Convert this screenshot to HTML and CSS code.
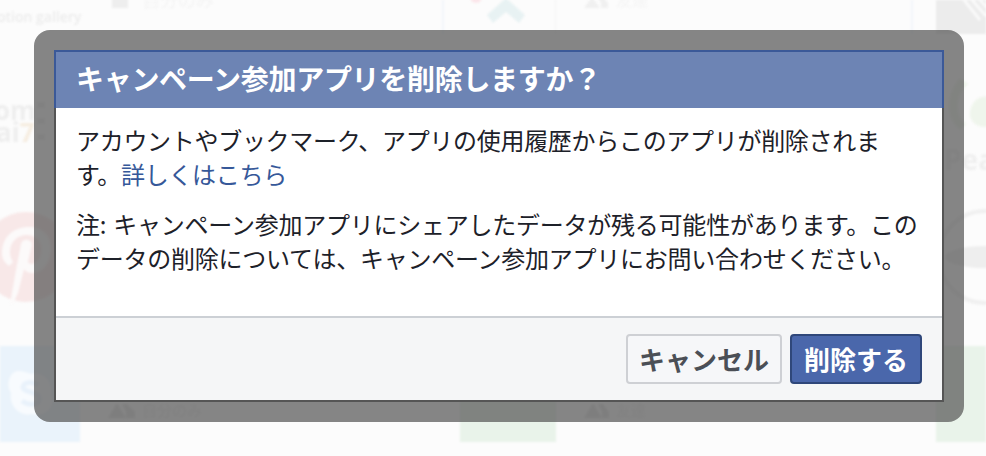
FILE: index.html
```html
<!DOCTYPE html>
<html lang="ja">
<head>
<meta charset="utf-8">
<title>キャンペーン参加アプリを削除しますか？</title>
<link rel="stylesheet" href="styles.css">
</head>
<body>
<svg class="backdrop" viewBox="0 0 986 456" width="986" height="456" aria-hidden="true">
  <g class="soft">
    <rect class="tile-blue" x="0" y="346" width="80" height="96"/>
    <rect class="tile-green" x="460" y="346" width="96" height="96"/>
    <rect class="tile-green" x="936" y="346" width="50" height="96"/>
    <rect class="tile-gray" x="936" y="0" width="50" height="34"/>
    <path class="stripe" d="M980 0l14 16M972 0l14 16M964 0l16 20"/>
    <rect class="edge" x="442" y="0" width="2" height="34"/>
    <rect class="edge" x="911" y="0" width="2" height="34"/>
    <rect class="edge-gray" x="555" y="0" width="1" height="34"/>

    <circle class="pin" cx="26" cy="257" r="45"/>
    <path class="pin-p" d="M2 254c0-18 12-27 27-27 14 0 22 9 22 21 0 15-8 25-19 25-4 0-7-2-8-4l-6 24-5 11-3 0 6-34 5-26c1-5 9-6 11 0l-4 18c3 5 13 1 13-13 0-9-6-14-14-14-11 0-17 8-17 17 0 5 2 8 3 10l-4 4c-4-3-7-7-7-12z"/>

    <path class="skype" d="M18 371c6 0 10 2 13 3 14-3 22 8 20 21 2 4 2 8 0 12-4 7-12 9-18 7-14 3-24-8-22-21-6-10 0-22 7-22z"/>
    <path class="skype-s" d="M38 385c-6-4-14-3-15 2 0 6 16 4 16 12 0 6-10 7-17 2" />

    <path class="chevron" d="M487 15l19-17 19 17-6 8-13-11-13 11z"/>
    <circle class="dot-pink" cx="476" cy="-3" r="6"/>

    <text class="blur-text" x="-3" y="22">otion gallery</text>
    <rect class="square" x="112" y="-4" width="16" height="12"/>
    <text class="faint-text" x="142" y="7">自分のみ</text>

    <path class="people" d="M584 8l8-11 8 11zM601 8v-5l-3-6 5 0 5 6v5z"/>
    <text class="faint-text small" x="616" y="6">友達</text>

    <text class="big-text" x="-6" y="120">om</text>
    <text class="big-text" x="-4" y="142">ai<tspan class="orange">7</tspan></text>
    <rect class="square" x="37" y="102" width="8" height="6"/>
    <rect class="square" x="37" y="118" width="8" height="6"/>
    <rect class="square" x="37" y="134" width="8" height="6"/>

    <path class="leaf" d="M960 78c-14 14-16 40 0 52l6-6c-12-10-10-30 2-40zM976 100c8-6 14-4 14 4v22c-10 4-22-4-20-14 0-4 2-8 6-12z"/>
    <text class="big-text pea" x="944" y="170">Pea</text>
    <circle class="ring" cx="985" cy="257" r="46"/>
    <ellipse class="lens" cx="985" cy="257" rx="40" ry="11"/>

    <path class="people-under" d="M108 418l9-15 9 15zM126 418v-6l-4-8 5 0 8 8v6z"/>
    <text class="under-text" x="142" y="416">自分のみ</text>
    <path class="people-under" d="M584 418l9-15 9 15zM602 418v-6l-4-8 5 0 6 8v6z"/>
    <text class="under-text" x="616" y="416">友達</text>
  </g>
</svg>

<section class="frame" role="dialog" aria-labelledby="dialog-title">
  <div class="dialog">
    <h1 class="dialog-title" id="dialog-title">キャンペーン参加アプリを削除しますか？</h1>
    <div class="dialog-body">
      <p class="copy">アカウントやブックマーク、アプリの使用履歴からこのアプリが削除されます。<a class="more" href="#">詳しくはこちら</a></p>
      <p class="copy note">注: キャンペーン参加アプリにシェアしたデータが残る可能性があります。このデータの削除については、キャンペーン参加アプリにお問い合わせください。</p>
    </div>
    <div class="dialog-footer">
      <button class="btn btn-cancel" type="button">キャンセル</button>
      <button class="btn btn-delete" type="button">削除する</button>
    </div>
  </div>
</section>
</body>
</html>
```

FILE: styles.css
```css
* { box-sizing: border-box; }

html, body {
  margin: 0;
  height: 100%;
}

body {
  position: relative;
  width: 986px;
  height: 456px;
  overflow: hidden;
  background: #fcfcfc;
  font-family: "Noto Sans CJK JP", "Liberation Sans", sans-serif;
}

/* Blurred page lying behind the dialog */
.backdrop {
  position: absolute;
  top: 0;
  left: 0;
  display: block;
}
.soft { filter: blur(1.2px); }
.tile-blue { fill: #eaf3fb; }
.tile-green { fill: #e9f3ea; }
.tile-gray { fill: #ececec; }
.stripe { fill: none; stroke: #fafafa; stroke-width: 3; }
.edge { fill: #f2f5fb; }
.edge-gray { fill: #f3f3f3; }
.pin { fill: #f8e8e8; }
.pin-p { fill: #fcfafa; }
.skype { fill: #f8fbfe; }
.skype-s { fill: none; stroke: #e9f2fb; stroke-width: 5; }
.chevron { fill: #e8f2f3; }
.dot-pink { fill: #fbe6ea; }
.square { fill: #eeeeee; }
.people { fill: #f0f0f0; }
.people-under { fill: #e4e4e4; }
.blur-text {
  fill: #ececec;
  font: 600 14px "Open Sans", sans-serif;
}
.faint-text {
  fill: #f4f4f4;
  font: 400 18px "Noto Sans CJK JP", sans-serif;
}
.faint-text.small { font-size: 16px; }
.under-text {
  fill: #ececec;
  font: 400 15px "Noto Sans CJK JP", sans-serif;
}
.big-text {
  fill: #eeeeee;
  font: 700 26px "Open Sans", sans-serif;
}
.big-text.pea { fill: #efefef; font-size: 28px; }
.orange { fill: #f6ede1; }
.leaf { fill: #eff5ec; }
.ring { fill: #fcfcfc; stroke: #f0f0f0; stroke-width: 4; }
.lens { fill: #eeeeee; }

/* Dialog */
.frame {
  position: absolute;
  top: 30px;
  left: 34px;
  width: 930px;
  height: 392px;
  border: 20px solid rgba(82, 82, 82, 0.7);
  border-radius: 16px;
  background-clip: padding-box;
}

.dialog {
  display: flex;
  flex-direction: column;
  height: 100%;
  border: 2px solid #555555;
  border-top: 0;
  background: #ffffff;
}

.dialog-title {
  flex: none;
  height: 58px;
  margin: 0 -2px;
  padding: 0 20px;
  border: 2px solid #3b5998;
  border-bottom: 0;
  background: #6d84b4;
  color: #ffffff;
  font-size: 28px;
  font-weight: 700;
  line-height: 52px;
  letter-spacing: -0.3px;
  white-space: nowrap;
}

.dialog-body {
  flex: 1;
  display: flex;
  flex-direction: column;
  gap: 16px;
  padding: 15px 18px 0 20px;
}

.copy {
  margin: 0;
  color: #1d2129;
  font-size: 24px;
  line-height: 34px;
  letter-spacing: -0.3px;
  text-spacing-trim: space-all;
}

.note {
  letter-spacing: -0.24px;
  word-spacing: 2px;
}

.more {
  color: #365899;
  text-decoration: none;
}

.dialog-footer {
  flex: none;
  display: flex;
  justify-content: flex-end;
  gap: 8px;
  height: 84px;
  padding: 16px 20px;
  border-top: 2px solid #ccd0d5;
  background: #f5f6f7;
}

.btn {
  height: 50px;
  padding: 0;
  border: 2px solid;
  border-radius: 4px;
  font-family: inherit;
  font-size: 26px;
  font-weight: 700;
  line-height: 44px;
}
.btn-cancel {
  width: 156px;
  border-color: #ced0d4;
  background: #f6f7f9;
  color: #4b4f56;
}
.btn-delete {
  width: 132px;
  border-color: #2f477a;
  background: #4a67ab;
  color: #ffffff;
}
```
